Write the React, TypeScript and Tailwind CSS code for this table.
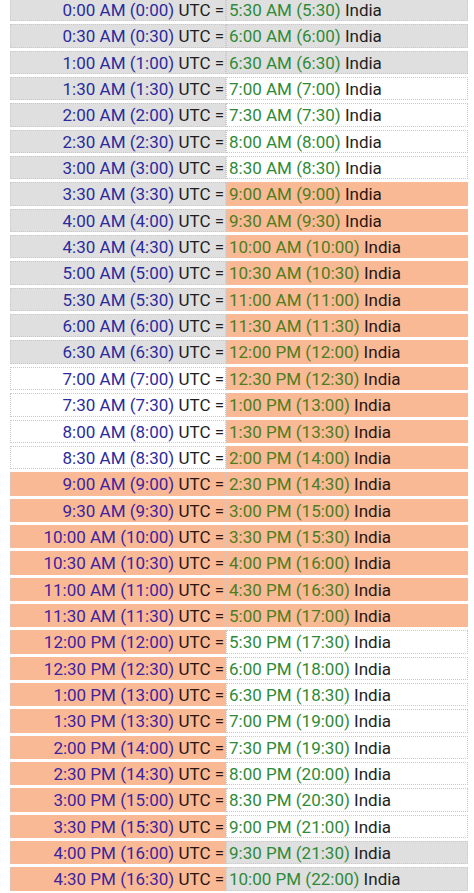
const GRAY = 'bg-[#dfdfdf]';
const WHITE = 'bg-white';
const ORANGE = 'bg-[#f9b995]';

function fmt(min: number) {
  const h = Math.floor(min / 60);
  const m = min % 60;
  const mm = m === 0 ? '00' : '30';
  const ampm = h < 12 ? 'AM' : 'PM';
  const h12 = h > 12 ? h - 12 : h;
  return `${h12}:${mm} ${ampm} (${h}:${mm})`;
}

function leftBg(i: number) {
  if (i < 14) return GRAY;
  if (i < 18) return WHITE;
  return ORANGE;
}

function rightBg(i: number) {
  if (i < 3) return GRAY;
  if (i < 7) return WHITE;
  if (i < 24) return ORANGE;
  if (i < 32) return WHITE;
  return GRAY;
}

const rows = Array.from({ length: 34 }, (_, i) => ({
  utc: fmt(i * 30),
  india: fmt(i * 30 + 330),
  lb: leftBg(i),
  rb: rightBg(i),
}));

export default function App() {
  return (
    <div
      className="min-h-screen bg-white pl-[10px] pr-[6px] overflow-hidden"
      style={{ fontFamily: 'Roboto, "Liberation Sans", sans-serif' }}
    >
      <div className="-mt-[2px] flex flex-col gap-[3px]">
        {rows.map((r, i) => {
          const lo = r.lb === ORANGE;
          const ro = r.rb === ORANGE;
          return (
            <div key={i} className="flex h-[23.35px] text-[17px] leading-[22px]">
              <div
                className={`w-[216px] shrink-0 border border-dotted border-[#c9c9c9] text-right pr-[1px] whitespace-nowrap ${r.lb}`}
              >
                <span className={lo ? 'text-[#3d23a0]' : 'text-[#2b2b9e]'}>{r.utc}</span>
                <span className={lo ? 'text-[#2a1510]' : 'text-[#1e1e1e]'}> UTC =</span>
              </div>
              <div
                className={`flex-1 border border-dotted border-[#c9c9c9] pl-[2px] whitespace-nowrap ${r.rb}`}
              >
                <span className={ro ? 'text-[#4e7d20]' : 'text-[#2f8a38]'}>{r.india}</span>
                <span className={ro ? 'text-[#2a1510]' : 'text-[#1e1e1e]'}> India</span>
              </div>
            </div>
          );
        })}
      </div>
    </div>
  );
}
